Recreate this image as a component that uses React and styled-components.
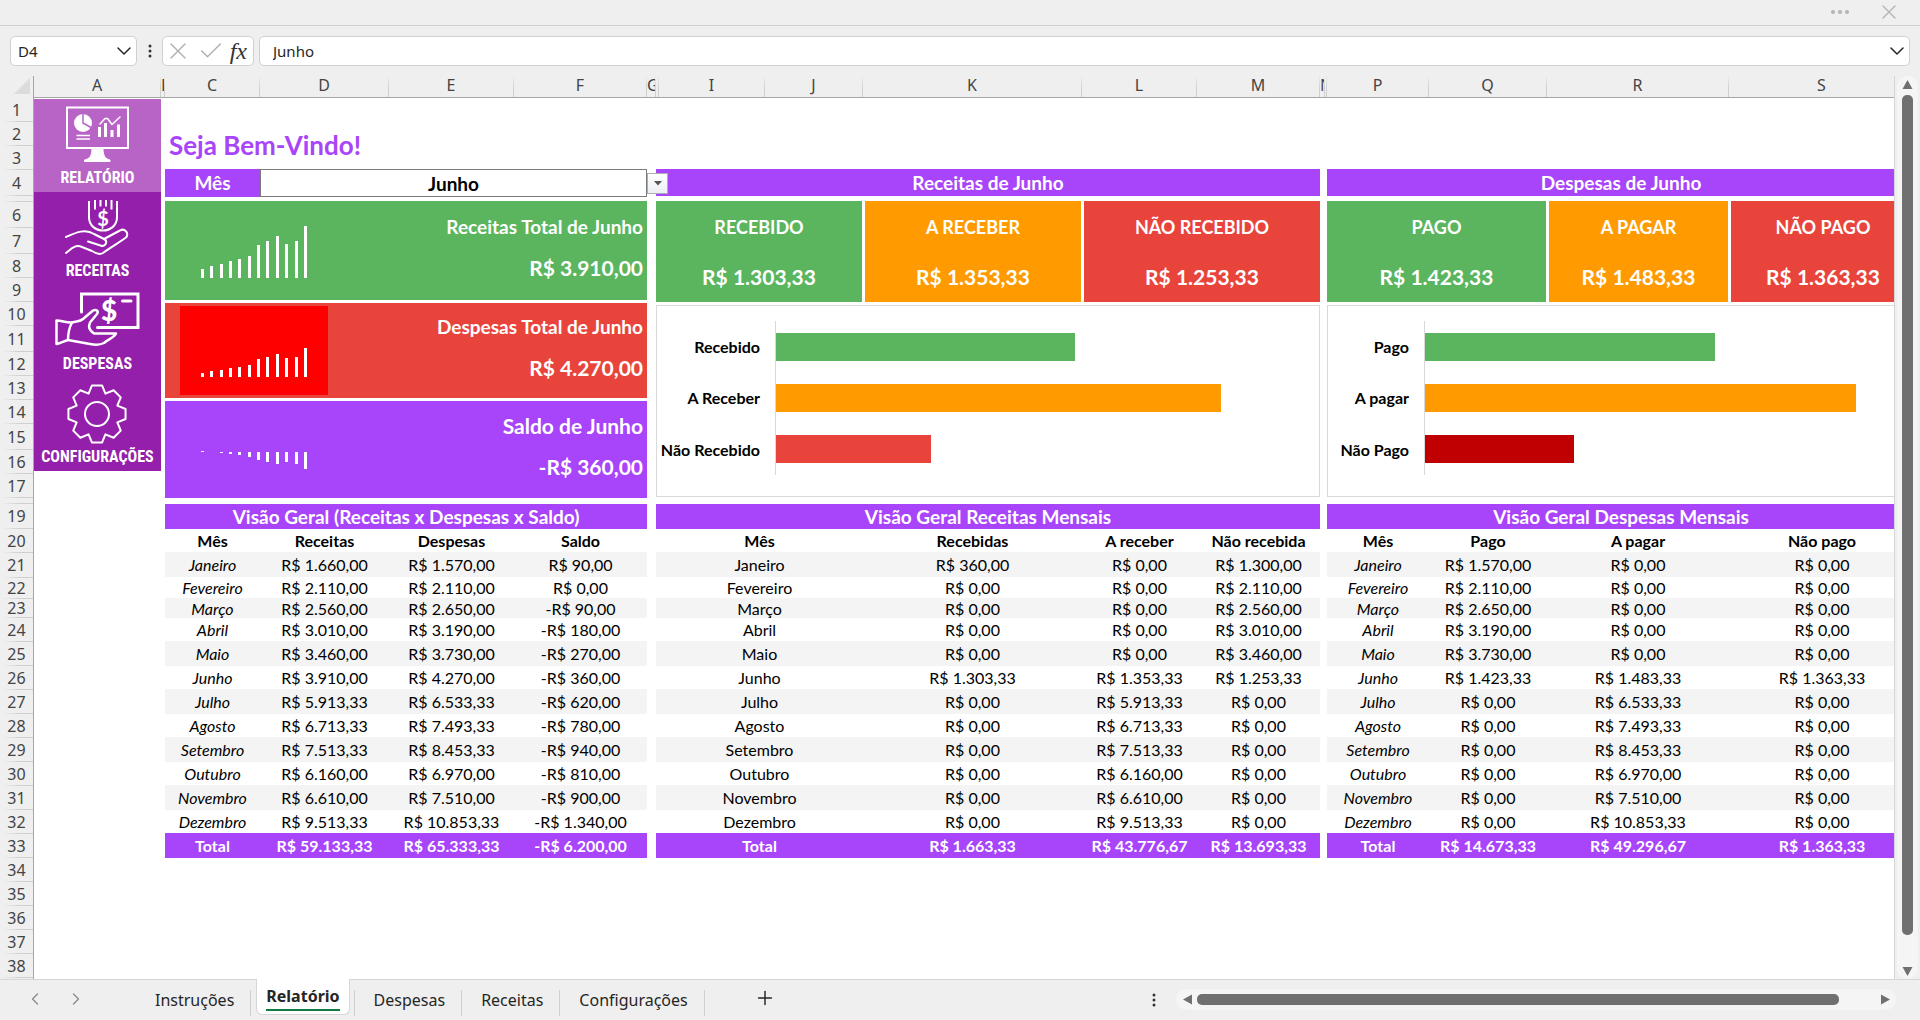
import React, { useState } from "react";
import styled, { createGlobalStyle } from "styled-components";
import { Check, ChevronDown, ChevronLeft, ChevronRight, Plus, X } from "lucide-react";

const PURPLE = "#a845fa";
const GREEN = "#5ab55e";
const ORANGE = "#ff9b00";
const RED = "#e9443c";
const UI_FONT = `"Noto Sans", "Open Sans", sans-serif`;

const GlobalStyle = createGlobalStyle`
  * {
    box-sizing: border-box;
  }
  body {
    margin: 0;
    background: #efefef;
    font-family: Lato, sans-serif;
    color: #000;
  }
  button, input, select {
    font: inherit;
    color: inherit;
    margin: 0;
    padding: 0;
    border: none;
    background: none;
  }
`;

const Root = styled.div`
  display: flex;
  flex-direction: column;
  min-height: 100vh;
  overflow: hidden;
`;

const TitleBar = styled.header`
  display: flex;
  justify-content: flex-end;
  align-items: center;
  gap: 28px;
  height: 26px;
  padding: 0 19px 2px;
  border-bottom: 1px solid #d0d0d0;
  color: #b4b4b4;
`;

const IconButton = styled.button`
  display: flex;
  align-items: center;
  justify-content: center;
  color: ${(props) => props.$color || "inherit"};
`;

const FormulaBar = styled.div`
  display: flex;
  align-items: center;
  height: 50px;
  padding: 0 10px;
  font-family: ${UI_FONT};
  font-size: 15px;
  color: #262626;
`;

const Box = styled.div`
  display: flex;
  align-items: center;
  height: 30px;
  border: 1px solid #d0d0d0;
  border-radius: 5px;
  background: #fff;
`;

const NameBox = styled(Box)`
  width: 127px;
  padding-left: 7px;
  input {
    flex: 1;
    min-width: 0;
  }
`;

const DotsWrap = styled.span`
  display: flex;
  justify-content: center;
  width: 25px;
`;

const FormulaButtons = styled(Box)`
  width: 92px;
  padding: 0 6px 0 1px;
  justify-content: space-between;
  margin-right: 5px;
`;

const Fx = styled.span`
  font-family: "Liberation Serif", serif;
  font-style: italic;
  font-size: 24px;
  line-height: 24px;
  color: #333;
`;

const FormulaInput = styled(Box)`
  flex: 1;
  padding-left: 13px;
  input {
    flex: 1;
  }
`;

const Workspace = styled.div`
  flex: 1;
  display: flex;
`;

const RowHeaders = styled.div`
  width: 34px;
  flex-shrink: 0;
  border-right: 1px solid #a6a6a6;
  font-family: ${UI_FONT};
  font-size: 16px;
  line-height: 18px;
  color: #444;
`;

const Corner = styled.div`
  display: flex;
  justify-content: flex-end;
  align-items: flex-end;
  height: 22px;
  padding: 0 3px 4px 0;
`;

const RowHeader = styled.div`
  display: flex;
  align-items: center;
  justify-content: center;
  height: ${(props) => props.$height}px;
  border-bottom: 1px solid;
  border-image: linear-gradient(to right, #efefef 10%, #cfcfcf 60%) 1;
`;

const Sheet = styled.div`
  flex: 1;
  min-width: 0;
  overflow: hidden;
  background: #fff;
  border-right: 1px solid #d6d6d6;
`;

/* the last column runs on past the right edge of the window */
const ColumnHeaders = styled.div`
  display: grid;
  grid-template-columns: ${(props) => props.$columns};
  width: calc(100% + 21px);
  height: 22px;
  background: #efefef;
  border-bottom: 1px solid #a6a6a6;
  font-family: ${UI_FONT};
  font-size: 16px;
  line-height: 19px;
  color: #444;
`;

const ColumnHeader = styled.div`
  text-align: ${(props) => (props.$narrow ? "left" : "center")};
  min-width: 0;
  overflow: hidden;
  border-right: 1px solid;
  border-image: linear-gradient(to bottom, #efefef, #cfcfcf 60%) 1;
`;

const Board = styled.div`
  display: grid;
  grid-template-columns: 127fr 4fr 482fr 9fr 664fr 7fr 588fr;
  grid-template-rows: 71px auto;
  width: calc(100% + 21px);
`;

const Sidebar = styled.nav`
  grid-column: 1;
  grid-row: 1 / 3;
  align-self: start;
  padding-top: 1px;
`;

const SidebarLink = styled.a`
  display: flex;
  flex-direction: column;
  align-items: center;
  height: 93px;
  background: ${(props) => (props.$active ? "#b863c6" : "#941fab")};
  color: #fff;
  text-decoration: none;
  font-family: "Liberation Sans Narrow", "Roboto Condensed", Roboto, sans-serif;
  font-weight: bold;
  font-size: 16px;
  line-height: 20px;
`;

const Welcome = styled.h1`
  grid-column: 3;
  grid-row: 1;
  align-self: end;
  margin: 0;
  padding-left: 4px;
  font-size: 26px;
  line-height: 48px;
  color: ${PURPLE};
`;

const Panel = styled.section`
  grid-column: ${(props) => props.$column};
  grid-row: 2;
  min-width: 0;
`;

const PanelTitle = styled.h2`
  margin: 0 0 5px;
  height: 27px;
  line-height: 27px;
  text-align: center;
  font-size: 19px;
  background: ${PURPLE};
  color: #fff;
`;

const PanelBody = styled.div`
  display: flex;
  flex-direction: column;
  gap: 3px;
  min-height: 297px;
  margin-bottom: 6px;
`;

const MonthPicker = styled.div`
  position: relative;
  display: grid;
  grid-template-columns: 95fr 387fr;
  height: 27px;
  margin-bottom: 5px;
  font-size: 19px;
  font-weight: bold;
  label {
    background: ${PURPLE};
    color: #fff;
    text-align: center;
    line-height: 28px;
  }
  select {
    appearance: none;
    border: 1px solid #7a7a7a;
    text-align: center;
    text-align-last: center;
  }
`;

const PickerArrow = styled.span`
  position: absolute;
  left: 100%;
  top: 4px;
  display: flex;
  align-items: center;
  justify-content: center;
  width: 21px;
  height: 21px;
  border: 1px solid #a9adb5;
  background: linear-gradient(#fff, #eceff3);
`;

const Summary = styled.div`
  display: flex;
  justify-content: space-between;
  align-items: center;
  height: ${(props) => props.$height}px;
  padding: 0 4px 0 15px;
  background: ${(props) => props.$color};
  color: #fff;
`;

const Spark = styled.svg`
  background: ${(props) => props.$background || "transparent"};
`;

const SummaryText = styled.div`
  display: flex;
  flex-direction: column;
  gap: 15px;
  padding-bottom: 6px;
  text-align: right;
  font-size: 19px;
  font-weight: bold;
  line-height: 26px;
`;

const SummaryLabel = styled.span`
  font-size: ${(props) => (props.$large ? 21 : 19)}px;
`;

const Value = styled.span`
  font-size: 21px;
`;

const Cards = styled.div`
  display: grid;
  grid-template-columns: ${(props) => props.$columns};
  gap: 3px;
`;

const Card = styled.div`
  display: flex;
  flex-direction: column;
  align-items: center;
  gap: 24px;
  height: 101px;
  padding-top: 13px;
  background: ${(props) => props.$color};
  color: #fff;
  font-size: 18px;
  font-weight: bold;
  line-height: 26px;
`;

const ChartBox = styled.div`
  display: flex;
  height: 192px;
  padding: 15px 0 21px;
  border: 1px solid #d9d9d9;
  font-size: 16px;
  font-weight: bold;
`;

const ChartLabels = styled.div`
  display: flex;
  flex-direction: column;
  width: ${(props) => props.$width}px;
  padding-right: 15px;
  white-space: nowrap;
  span {
    flex: 1;
    display: flex;
    align-items: center;
    justify-content: flex-end;
  }
`;

const Plot = styled.div`
  flex: 1;
  display: flex;
  flex-direction: column;
  justify-content: space-around;
  border-left: 1px solid #d9d9d9;
`;

const Bar = styled.div`
  height: 28px;
  background: ${(props) => props.$color};
`;

const Table = styled.table`
  width: 100%;
  table-layout: fixed;
  border-collapse: collapse;
  text-align: center;
  font-size: 16px;
  line-height: 19px;
  caption {
    height: 25px;
    line-height: 25px;
    font-size: 19px;
    font-weight: bold;
    background: ${PURPLE};
    color: #fff;
  }
  th,
  td {
    padding: 0;
    white-space: nowrap;
  }
  tbody th {
    font-weight: normal;
    font-style: ${(props) => (props.$italic ? "italic" : "normal")};
  }
  tbody tr:nth-child(odd) {
    background: #f4f4f4;
  }
  tfoot {
    background: ${PURPLE};
    color: #fff;
    font-weight: bold;
  }
`;

const Row = styled.tr`
  height: ${(props) => props.$height}px;
`;

const VerticalScroll = styled.div`
  display: flex;
  flex-direction: column;
  align-items: center;
  width: 21px;
  margin: 0 2px;
  padding: 3px 0 2px;
  border-radius: 10px;
  background: #f5f5f5;
`;

const VerticalThumb = styled.div`
  flex: 1;
  width: 11px;
  margin: 5px 0 31px;
  border-radius: 5px;
  background: #707070;
`;

const Footer = styled.footer`
  display: flex;
  height: 41px;
  border-top: 1px solid #d6d6d6;
  font-family: ${UI_FONT};
  font-size: 16px;
  color: #262626;
`;

const SheetNav = styled.div`
  display: flex;
  align-items: center;
  gap: 21px;
  width: 136px;
  padding: 0 0 3px 25px;
  color: #8a8a8a;
`;

const Tab = styled.button`
  position: relative;
  height: 36px;
  margin-top: 2px;
  padding: 0 17px 0 19px;
  line-height: 36px;
  &::after {
    content: "";
    position: absolute;
    right: 0;
    top: 8px;
    height: 26px;
    border-right: 1px solid #cfcfcf;
  }
`;

const ActiveTab = styled.button`
  position: relative;
  height: 36px;
  margin: -1px 5px 0;
  padding: 0 9px;
  border: 1px solid #d6d6d6;
  border-top: none;
  border-radius: 0 0 6px 6px;
  background: #fff;
  font-weight: bold;
  span {
    display: block;
    border-bottom: 2px solid #107c41;
    line-height: 26px;
  }
  &::after {
    content: "";
    position: absolute;
    right: -6px;
    top: 11px;
    height: 26px;
    border-right: 1px solid #cfcfcf;
  }
`;

const AddTab = styled(IconButton)`
  width: 120px;
  padding-bottom: 4px;
`;

const FooterRight = styled.div`
  display: flex;
  align-items: center;
  gap: 20px;
  width: 40%;
  margin-left: auto;
  padding-right: 24px;
`;

const HorizontalScroll = styled.div`
  flex: 1;
  display: flex;
  align-items: center;
  height: 21px;
  margin-bottom: 2px;
  padding: 0 5px 0 6px;
  border-radius: 10px;
  background: #f5f5f5;
`;

const HorizontalThumb = styled.div`
  flex: 1;
  height: 11px;
  margin: 0 41px 0 4px;
  border-radius: 5px;
  background: #707070;
`;

const COLUMNS = [
  ["A", 127], ["B", 4], ["C", 95], ["D", 129], ["E", 125], ["F", 133],
  ["G", 9], ["", 3], ["I", 106], ["J", 98], ["K", 219], ["L", 115],
  ["M", 123], ["N", 5], ["", 2], ["P", 102], ["Q", 118], ["R", 182], ["S", 186],
];

const ROW_HEIGHTS = [
  24, 24, 24, 26, 6, 26, 26, 24, 24, 24, 26, 24, 24, 24, 26, 24, 24, 6, 25,
  24, 25, 21, 19, 24, 24, 24, 24, 24, 24, 24, 24, 24, 24, 24, 24, 24, 24, 24,
];

const MONTHS = [
  "Janeiro", "Fevereiro", "Março", "Abril", "Maio", "Junho",
  "Julho", "Agosto", "Setembro", "Outubro", "Novembro", "Dezembro",
];

const MONTH_ROW_HEIGHTS = [25, 21, 20, 23, 25, 23, 25, 23, 25, 23, 25, 23];

const OVERVIEW = [
  [1660, 1570, 90],
  [2110, 2110, 0],
  [2560, 2650, -90],
  [3010, 3190, -180],
  [3460, 3730, -270],
  [3910, 4270, -360],
  [5913.33, 6533.33, -620],
  [6713.33, 7493.33, -780],
  [7513.33, 8453.33, -940],
  [6160, 6970, -810],
  [6610, 7510, -900],
  [9513.33, 10853.33, -1340],
];

const INCOME = [
  [360, 0, 1300],
  [0, 0, 2110],
  [0, 0, 2560],
  [0, 0, 3010],
  [0, 0, 3460],
  [1303.33, 1353.33, 1253.33],
  [0, 5913.33, 0],
  [0, 6713.33, 0],
  [0, 7513.33, 0],
  [0, 6160, 0],
  [0, 6610, 0],
  [0, 9513.33, 0],
];

const EXPENSES = [
  [1570, 0, 0],
  [2110, 0, 0],
  [2650, 0, 0],
  [3190, 0, 0],
  [3730, 0, 0],
  [1423.33, 1483.33, 1363.33],
  [0, 6533.33, 0],
  [0, 7493.33, 0],
  [0, 8453.33, 0],
  [0, 6970, 0],
  [0, 7510, 0],
  [0, 10853.33, 0],
];

function money(value) {
  const [whole, cents] = Math.abs(value).toFixed(2).split(".");
  const grouped = whole.replace(/\B(?=(\d{3})+$)/g, ".");
  return `${value < 0 ? "-" : ""}R$ ${grouped},${cents}`;
}

function gearPath(cx, cy) {
  const points = [];
  for (let i = 0; i < 8; i++) {
    [[-10, 29], [10, 29], [22.5, 22]].forEach(([offset, r]) => {
      const angle = ((i * 45 + offset) * Math.PI) / 180;
      points.push(`${cx + r * Math.sin(angle)},${cy - r * Math.cos(angle)}`);
    });
  }
  return `M${points.join("L")}Z`;
}

const iconProps = {
  width: 127,
  height: 69,
  viewBox: "0 0 127 69",
  fill: "none",
  stroke: "#fff",
  strokeWidth: 2,
  strokeLinejoin: "round",
  strokeLinecap: "round",
  "aria-hidden": true,
};

function ReportIcon() {
  return (
    <svg {...iconProps}>
      <path d="M33 8.5H94V49H33Z" strokeLinejoin="miter" />
      <path d="M58 50H69C69 56 71 60 76 61V62.500H50.500V61C56 60 58 56 58 50Z" fill="#fff" strokeWidth="1" />
      <circle cx="49" cy="24" r="9" fill="#fff" stroke="none" />
      <path d="M49 15V24L57 28.500" stroke="#b863c6" strokeWidth="1.500" />
      <path d="M42.500 36.500H56M42.500 40H56" strokeWidth="1.500" strokeLinecap="butt" />
      <path d="M65.500 28V38M71.500 24V38M78 31V38M84.500 25.500V38" strokeWidth="3" strokeLinecap="butt" />
      <path d="M66 25L71 19.500H73.500L78 25.500L86 18" strokeWidth="1.500" />
    </svg>
  );
}

function IncomeIcon() {
  return (
    <svg {...iconProps}>
      <path d="M55 9V25C55 43 83 43 83 25V9" strokeLinecap="butt" />
      <path d="M61 8V17.500M66.500 8V14.500M72 8V14.500M77.500 8V17.500" strokeLinecap="butt" />
      <text x="69" y="34" fill="#fff" stroke="none" fontFamily="Lato, sans-serif" fontWeight="bold" fontSize="20" textAnchor="middle">$</text>
      <path d="M32 45C41 41 51 36 60 42L70 47L86 38.500C90 36 95 40 92.500 45C86 50 76 56 69 61C66 63 61 61 58 59L48 55C41 52 37 57 32 61" />
      <path d="M54 49.500L68 54C72 54 74 49 70 47" />
    </svg>
  );
}

function ExpenseIcon() {
  return (
    <svg {...iconProps} strokeWidth="3">
      <path d="M47.500 27V9H104V42.500H63.500" strokeLinejoin="miter" />
      <path d="M88.500 16H97" />
      <text x="75" y="36" fill="#fff" stroke="none" fontFamily="Lato, sans-serif" fontWeight="900" fontSize="28" textAnchor="middle">$</text>
      <path d="M22.500 35.500C28 35.500 32 38 38 37.500C35 43 34 49 34 55C30 56 27 58 22.500 59Z" strokeWidth="2.500" />
      <path d="M38 37.500C43 36 46 37 49 34L59 25.500C62 24 65 26 63 29L56 37.500C54 42 56 46 60 48.500H82C80 53 74 54 70 58C66 60 61 60 56 59L34 55" strokeWidth="2.500" />
    </svg>
  );
}

function SettingsIcon() {
  return (
    <svg {...iconProps}>
      <path d={gearPath(63, 36)} />
      <circle cx="63" cy="36" r="12" />
    </svg>
  );
}

function Dots({ vertical, color }) {
  const centers = vertical ? [[2, 2], [2, 7], [2, 12]] : [[2, 2], [9, 2], [16, 2]];
  return (
    <svg width={vertical ? 4 : 18} height={vertical ? 14 : 4} fill={color} aria-hidden="true">
      {centers.map(([x, y]) => (
        <circle key={`${x}-${y}`} cx={x} cy={y} r={vertical ? 1.5 : 2} />
      ))}
    </svg>
  );
}

function Arrow({ direction }) {
  const paths = {
    up: "M5.500 1L10.500 10H0.500Z",
    down: "M0.500 1H10.500L5.500 10Z",
    left: "M1 5.500L10 0.500V10.500Z",
    right: "M1 0.500L10 5.500L1 10.500Z",
  };
  return (
    <svg width="11" height="11" aria-hidden="true">
      <path d={paths[direction]} fill="#707070" />
    </svg>
  );
}

function Sparkline({ heights, baseline, background }) {
  return (
    <Spark width="148" height="89" shapeRendering="crispEdges" $background={background} aria-hidden="true">
      {heights.map((height, i) => (
        <rect
          key={i}
          x={21 + Math.round(i * 9.35)}
          y={height > 0 ? baseline - height : baseline}
          width="3"
          height={Math.abs(height)}
          fill="#fff"
        />
      ))}
    </Spark>
  );
}

function SummaryCard({ title, value, color, height, large, children }) {
  return (
    <Summary $color={color} $height={height}>
      {children}
      <SummaryText>
        <SummaryLabel $large={large}>{title}</SummaryLabel>
        <Value>{money(value)}</Value>
      </SummaryText>
    </Summary>
  );
}

function StatusCard({ title, value, color }) {
  return (
    <Card $color={color}>
      <span>{title}</span>
      <Value>{money(value)}</Value>
    </Card>
  );
}

function BarChart({ labelWidth, bars }) {
  return (
    <ChartBox>
      <ChartLabels $width={labelWidth}>
        {bars.map((bar) => (
          <span key={bar.label}>{bar.label}</span>
        ))}
      </ChartLabels>
      <Plot>
        {bars.map((bar) => (
          <Bar key={bar.label} $color={bar.color} style={{ width: `${bar.percent}%` }} />
        ))}
      </Plot>
    </ChartBox>
  );
}

function MonthTable({ title, headings, widths, rows, totals, italic }) {
  return (
    <Table $italic={italic}>
      <caption>{title}</caption>
      <colgroup>
        {widths.map((width, i) => (
          <col key={i} width={width} />
        ))}
      </colgroup>
      <thead>
        <Row $height={23}>
          <th scope="col">Mês</th>
          {headings.map((heading) => (
            <th scope="col" key={heading}>{heading}</th>
          ))}
        </Row>
      </thead>
      <tbody>
        {rows.map((row, i) => (
          <Row key={MONTHS[i]} $height={MONTH_ROW_HEIGHTS[i]}>
            <th scope="row">{MONTHS[i]}</th>
            {row.map((value, j) => (
              <td key={j}>{money(value)}</td>
            ))}
          </Row>
        ))}
      </tbody>
      <tfoot>
        <Row $height={25}>
          <th scope="row">Total</th>
          {totals.map((total, i) => (
            <td key={i}>{money(total)}</td>
          ))}
        </Row>
      </tfoot>
    </Table>
  );
}

function App() {
  const [month, setMonth] = useState("Junho");

  return (
    <Root>
      <GlobalStyle />
      <TitleBar>
        <IconButton aria-label="Mais opções">
          <Dots color="#b4b4b4" />
        </IconButton>
        <IconButton aria-label="Fechar">
          <X size={24} strokeWidth={1.4} />
        </IconButton>
      </TitleBar>

      <FormulaBar>
        <NameBox>
          <input aria-label="Caixa de nome" defaultValue="D4" />
          <ChevronDown size={24} strokeWidth={1.5} />
        </NameBox>
        <DotsWrap>
          <Dots vertical color="#333" />
        </DotsWrap>
        <FormulaButtons>
          <IconButton aria-label="Cancelar" $color="#b0b0b0">
            <X size={28} strokeWidth={1.2} />
          </IconButton>
          <IconButton aria-label="Inserir" $color="#b0b0b0">
            <Check size={28} strokeWidth={1.2} />
          </IconButton>
          <IconButton aria-label="Inserir função">
            <Fx>fx</Fx>
          </IconButton>
        </FormulaButtons>
        <FormulaInput>
          <input aria-label="Barra de fórmulas" value={month} readOnly />
          <ChevronDown size={24} strokeWidth={1.5} />
        </FormulaInput>
      </FormulaBar>

      <Workspace>
        <RowHeaders>
          <Corner>
            <svg width="16" height="16" aria-hidden="true">
              <path d="M16 0V16H0Z" fill="#dcdcdc" />
            </svg>
          </Corner>
          {ROW_HEIGHTS.map((height, i) => (
            <RowHeader key={i} $height={height}>{height > 6 && i + 1}</RowHeader>
          ))}
        </RowHeaders>

        <Sheet>
          <ColumnHeaders $columns={COLUMNS.map(([, width]) => `${width}fr`).join(" ")}>
            {COLUMNS.map(([name, width], i) => (
              <ColumnHeader key={i} $narrow={width < 10}>{name}</ColumnHeader>
            ))}
          </ColumnHeaders>

          <Board>
            <Sidebar>
              <SidebarLink href="#relatorio" $active>
                <ReportIcon />
                RELATÓRIO
              </SidebarLink>
              <SidebarLink href="#receitas">
                <IncomeIcon />
                RECEITAS
              </SidebarLink>
              <SidebarLink href="#despesas">
                <ExpenseIcon />
                DESPESAS
              </SidebarLink>
              <SidebarLink href="#configuracoes">
                <SettingsIcon />
                CONFIGURAÇÕES
              </SidebarLink>
            </Sidebar>

            <Welcome>Seja Bem-Vindo!</Welcome>

            <Panel $column={3}>
              <MonthPicker>
                <label htmlFor="month">Mês</label>
                <select id="month" value={month} onChange={(e) => setMonth(e.target.value)}>
                  {MONTHS.map((name) => (
                    <option key={name}>{name}</option>
                  ))}
                </select>
                <PickerArrow aria-hidden="true">
                  <svg width="8" height="5">
                    <path d="M0 0H8L4 4.500Z" fill="#555" />
                  </svg>
                </PickerArrow>
              </MonthPicker>
              <PanelBody>
                <SummaryCard title="Receitas Total de Junho" value={3910} color={GREEN} height={99}>
                  <Sparkline baseline={72} heights={[9, 12, 14, 17, 19, 22, 33, 37, 42, 34, 37, 52]} />
                </SummaryCard>
                <SummaryCard title="Despesas Total de Junho" value={4270} color={RED} height={95}>
                  <Sparkline baseline={71} background="#ff0000" heights={[4, 6, 7, 9, 10, 12, 18, 20, 23, 19, 20, 29]} />
                </SummaryCard>
                <SummaryCard title="Saldo de Junho" value={-360} color={PURPLE} height={97} large>
                  <Sparkline baseline={47} heights={[1, 0, -1, -2, -3, -5, -8, -10, -12, -10, -12, -17]} />
                </SummaryCard>
              </PanelBody>
              <MonthTable
                title="Visão Geral (Receitas x Despesas x Saldo)"
                headings={["Receitas", "Despesas", "Saldo"]}
                widths={[95, 129, 125, 133]}
                rows={OVERVIEW}
                totals={[59133.33, 65333.33, -6200]}
                italic
              />
            </Panel>

            <Panel $column={5}>
              <PanelTitle>Receitas de Junho</PanelTitle>
              <PanelBody>
                <Cards $columns="206fr 216fr 236fr">
                  <StatusCard title="RECEBIDO" value={1303.33} color={GREEN} />
                  <StatusCard title="A RECEBER" value={1353.33} color={ORANGE} />
                  <StatusCard title="NÃO RECEBIDO" value={1253.33} color={RED} />
                </Cards>
                <BarChart
                  labelWidth={118}
                  bars={[
                    { label: "Recebido", percent: 55, color: GREEN },
                    { label: "A Receber", percent: 82, color: ORANGE },
                    { label: "Não Recebido", percent: 28.6, color: RED },
                  ]}
                />
              </PanelBody>
              <MonthTable
                title="Visão Geral Receitas Mensais"
                headings={["Recebidas", "A receber", "Não recebida"]}
                widths={[207, 219, 115, 123]}
                rows={INCOME}
                totals={[1663.33, 43776.67, 13693.33]}
              />
            </Panel>

            <Panel $column={7}>
              <PanelTitle>Despesas de Junho</PanelTitle>
              <PanelBody>
                <Cards $columns="219fr 179fr 184fr">
                  <StatusCard title="PAGO" value={1423.33} color={GREEN} />
                  <StatusCard title="A PAGAR" value={1483.33} color={ORANGE} />
                  <StatusCard title="NÃO PAGO" value={1363.33} color={RED} />
                </Cards>
                <BarChart
                  labelWidth={96}
                  bars={[
                    { label: "Pago", percent: 59.3, color: GREEN },
                    { label: "A pagar", percent: 88.1, color: ORANGE },
                    { label: "Não Pago", percent: 30.5, color: "#c00000" },
                  ]}
                />
              </PanelBody>
              <MonthTable
                title="Visão Geral Despesas Mensais"
                headings={["Pago", "A pagar", "Não pago"]}
                widths={[102, 118, 182, 186]}
                rows={EXPENSES}
                totals={[14673.33, 49296.67, 1363.33]}
                italic
              />
            </Panel>
          </Board>
        </Sheet>

        <VerticalScroll>
          <Arrow direction="up" />
          <VerticalThumb />
          <Arrow direction="down" />
        </VerticalScroll>
      </Workspace>

      <Footer>
        <SheetNav>
          <IconButton aria-label="Planilha anterior">
            <ChevronLeft size={20} strokeWidth={1.5} />
          </IconButton>
          <IconButton aria-label="Próxima planilha">
            <ChevronRight size={20} strokeWidth={1.5} />
          </IconButton>
        </SheetNav>
        <Tab>Instruções</Tab>
        <ActiveTab>
          <span>Relatório</span>
        </ActiveTab>
        <Tab>Despesas</Tab>
        <Tab>Receitas</Tab>
        <Tab>Configurações</Tab>
        <AddTab aria-label="Nova planilha">
          <Plus size={22} strokeWidth={1.6} />
        </AddTab>
        <FooterRight>
          <Dots vertical color="#333" />
          <HorizontalScroll>
            <Arrow direction="left" />
            <HorizontalThumb />
            <Arrow direction="right" />
          </HorizontalScroll>
        </FooterRight>
      </Footer>
    </Root>
  );
}

export default App;
